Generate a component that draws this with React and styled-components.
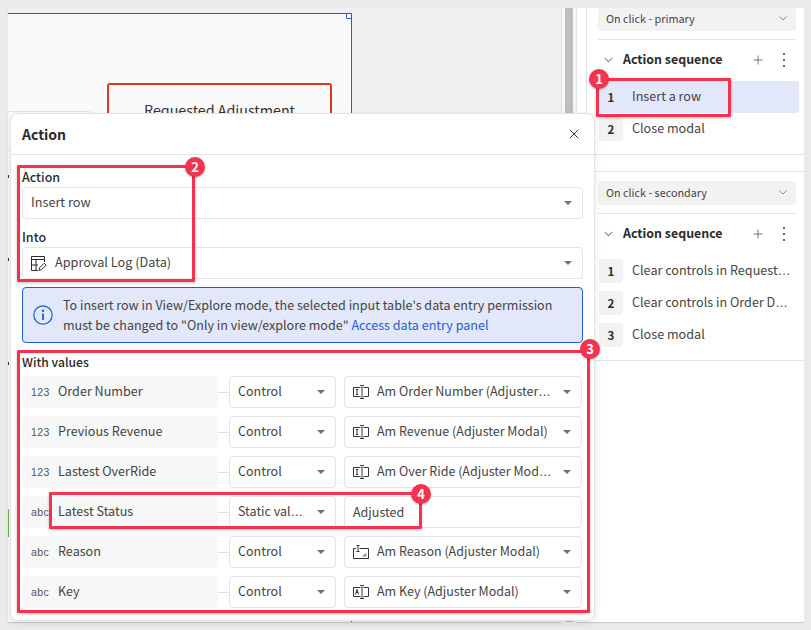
import React from "react";
import styled, { createGlobalStyle } from "styled-components";

const Global = createGlobalStyle`
  html, body { margin: 0; padding: 0; background: #ebebeb; }
  * { box-sizing: border-box; }
  body { font-family: "Noto Sans CJK KR", "Noto Sans", sans-serif; color: #2b2b2b; -webkit-font-smoothing: antialiased; }
`;

const Page = styled.div`
  position: relative; width: 811px; height: 630px; overflow: hidden;
  display: flex; padding: 8px 8px 0 8px; background: #ebebeb;
`;
const Canvas = styled.div`
  position: relative; width: 553px; height: 614px; background: #f0f0f0; flex: none;
  box-shadow: 0 1px 1px rgba(0,0,0,.12);
`;
const Frame = styled.div`
  position: absolute; left: 0; top: 5px; width: 344px; height: 609px;
  background: #fafafa; border-top: 1px solid #1f5fd6; border-right: 1px solid #1f5fd6;
`;
const Handle = styled.span`
  position: absolute; right: -1px; top: -1px; width: 6px; height: 6px;
  background: #fff; border: 1px solid #1f5fd6; border-radius: 1px;
`;
const RequestBox = styled.div`
  position: absolute; left: 99px; top: 69px; width: 225px; height: 70px;
  border: 2px solid #d93a1e; border-radius: 3px; text-align: center;
  font-size: 14.3px; line-height: 20px; padding-top: 15px; color: #333;
`;
const GhostBox = styled.div`
  position: absolute; left: 0; top: 97px; width: 83px; height: 40px;
  border: 1px solid #e4e4e4; border-left: none; border-radius: 0 3px 0 0;
`;
const GreenBar = styled.span`
  position: absolute; left: 0; top: 495px; width: 1px; height: 28px; background: #6ab04c;
`;
const Tick = styled.span`
  position: absolute; left: 0; top: ${p => p.$y}px; width: 1px; height: 3px; background: #333;
`;
const ScrollTrack = styled.div`
  width: 4px; height: 614px; background: #f8f8f8; border-left: 1px solid #e6e6e6; flex: none;
`;
const Scrollbar = styled.div`
  width: 8px; height: 614px; background: #bdbdbd; flex: none;
`;
const Gutter = styled.div`
  width: 3px; flex: none; background: #f7f7f7; height: 614px;
`;
const PanelEdge = styled.div`
  width: 10px; height: 614px; background: #fff; flex: none; border-left: 1px solid #e2e2e2;
  box-shadow: 0 1px 1px rgba(0,0,0,.12);
`;
const Panel = styled.aside`
  width: 218px; height: 614px; background: #fff; flex: none; border-left: 1px solid #e2e2e2;
  box-shadow: 0 1px 1px rgba(0,0,0,.12);
`;
const Section = styled.section`
  padding: 0 0 0 11px; border-bottom: 1px solid #e4e4e4;
  height: ${p => p.$h}px; padding-top: ${p => p.$top}px;
  border-top: ${p => (p.$line ? "1px solid #e4e4e4" : "none")};
`;
const Spacer = styled.div`
  height: 16px;
`;
const TriggerSelect = styled.div`
  width: 198px; height: ${p => p.$h}px; background: #f2f2f2; border-radius: 4px;
  display: flex; align-items: center; justify-content: space-between; padding: 0 8px ${p => p.$pb}px;
  font-size: 10.8px; color: #444;
`;
const SeqDivider = styled.div`
  width: 198px; height: 1px; background: #e4e4e4; margin-top: 8px;
`;
const SeqHeader = styled.div`
  display: flex; align-items: center; height: 41px; width: 198px; padding: 0 10px 2px 5px; color: #666;
`;
const SeqTitle = styled.div`
  flex: 1; font-size: 12.4px; font-weight: 700; color: #2b2b2b; margin-left: 9px; padding-bottom: 1px;
`;
const PlusGap = styled.span`
  width: 19px; flex: none;
`;
const SeqRow = styled.div`
  display: flex; align-items: center; height: 32px; width: 201px; padding-left: 1px;
  background: ${p => (p.$active ? "#e2e8fa" : "transparent")}; border-radius: 3px;
  font-size: 12.6px; color: #444;
`;
const SeqNum = styled.span`
  width: 24px; height: 24px; flex: none; border-radius: 3px; font-size: 11.5px; font-weight: 600; color: #2b2b2b;
  display: flex; align-items: center; justify-content: center;
  background: ${p => (p.$active ? "transparent" : "#f2f2f2")};
  margin-right: 9px;
`;
const SeqText = styled.span`
  white-space: nowrap; padding-bottom: 4px;
`;
const Dots = styled.span`
  font-family: "Liberation Sans", sans-serif;
`;

const Modal = styled.div`
  position: absolute; left: 10px; top: 113px; width: 585px; height: 508px; background: #fff;
  border: 1px solid #e3e3e3; border-radius: 8px; box-shadow: 0 2px 6px rgba(0,0,0,.1);
`;
const ModalHeader = styled.header`
  height: 41px; display: flex; align-items: center; justify-content: space-between;
  padding: 0 15px 0 11px; border-bottom: 1px solid #e4e4e4;
  font-size: 14px; font-weight: 600; color: #2b2b2b;
`;
const ModalBody = styled.div`
  padding: 0 11px;
`;
const Label = styled.div`
  font-size: 12.5px; font-weight: 500; height: 20px; color: #2b2b2b;
  margin-top: ${p => p.$top}px; padding-top: 3px; line-height: 14px;
`;
const Select = styled.div`
  height: 32px; border: 1px solid #e4e4e4; border-radius: 4px; background: #fff;
  display: flex; align-items: center; padding: 0 10px 0 8px;
  font-size: ${p => p.$fs ?? 12.5}px; color: #444; width: ${p => (p.$w ? p.$w + "px" : "auto")}; flex: none;
`;
const SelectText = styled.span`
  flex: 1; white-space: nowrap; min-width: 0; padding-bottom: ${p => p.$pb ?? 3}px;
`;
const Caret = styled.span`
  width: 0; height: 0; flex: none; margin-left: 12px; border-left: 4px solid transparent; border-right: 4px solid transparent;
  border-top: 4px solid #707070;
`;
const LeadIcon = styled.span`
  display: flex; width: 16px; margin-right: 8px; flex: none; color: #333;
`;
const Info = styled.div`
  margin-top: 8px; height: 56px; background: #e2e8fa; border: 1px solid #1f5fd6; border-radius: 4px;
  display: flex; align-items: center; padding: 0 10px; gap: 10px; font-size: 12.55px; line-height: 20px; color: #444;
`;
const InfoLink = styled.span`
  color: #1f5fd6;
`;
const ValuesLabel = styled.div`
  font-size: 12.2px; font-weight: 500; margin-top: 11px; height: 22px; line-height: 16px;
`;
const ValueRows = styled.div`
  display: flex; flex-direction: column; gap: 8px;
`;
const ValueRow = styled.div`
  display: flex; align-items: center;
`;
const NameCell = styled.div`
  width: 196px; height: 32px; background: #f7f7f7; border-radius: 3px; flex: none;
  display: flex; align-items: center; font-size: 12.6px; color: #444; padding-left: 9px;
`;
const NameText = styled.span`
  padding-bottom: 3px;
`;
const TypeTag = styled.span`
  width: 27px; font-family: "Liberation Sans", sans-serif; font-size: 10.5px; color: #555; flex: none; letter-spacing: .4px; padding-bottom: 1px;
`;
const Connector = styled.span`
  width: 11px; height: 1px; background: #e0e0e0; flex: none;
`;
const RowGap = styled.span`
  width: 8px; flex: none;
`;

const Callout = styled.div`
  position: absolute; border: 3px solid #f5334f; border-radius: 1px;
  left: ${p => p.$x}px; top: ${p => p.$y}px; width: ${p => p.$w}px; height: ${p => p.$h}px;
  box-shadow: 0 1px 3px rgba(0,0,0,.25); pointer-events: none;
`;
const Badge = styled.span`
  position: absolute; width: 20px; height: 20px; border-radius: 50%; background: #f5334f; color: #fff;
  left: ${p => p.$x - 10}px; top: ${p => p.$y - 10}px; padding-bottom: 1px;
  font-size: 13px; font-weight: 700; display: flex; align-items: center; justify-content: center;
  box-shadow: 0 1px 2px rgba(0,0,0,.25);
`;

const Chevron = ({ c = "#8a8a8a", s = 10 }) => (
  <svg width={s} height={s} viewBox="0 0 10 10" fill="none"><path d="M1.5 3.5 5 7l3.500-3.500" stroke={c} strokeWidth="1" /></svg>
);
const Plus = () => (
  <svg width="10" height="10" viewBox="0 0 10 10"><path d="M5 .5v9M.5 5h9" stroke="#777" strokeWidth="1" /></svg>
);
const Kebab = () => (
  <svg width="4" height="16" viewBox="0 0 4 16" fill="#444"><circle cx="2" cy="2" r="1.1" /><circle cx="2" cy="8" r="1.1" /><circle cx="2" cy="14" r="1.1" /></svg>
);
const Close = () => (
  <svg width="10" height="10" viewBox="0 0 10 10"><path d="M.7.7l8.600 8.600M9.300.7.700 9.300" stroke="#333" strokeWidth="1" /></svg>
);
const InfoIcon = () => (
  <svg width="20" height="20" viewBox="0 0 20 20" fill="none" style={{ flex: "none" }}>
    <circle cx="10" cy="10" r="9.200" stroke="#1f5fd6" strokeWidth="1.200" />
    <circle cx="10" cy="5.800" r="1.200" fill="#1f5fd6" />
    <path d="M10 8.500v6.500" stroke="#1f5fd6" strokeWidth="1.800" />
  </svg>
);
const TableEdit = () => (
  <svg width="16" height="16" viewBox="0 0 16 16" fill="none" stroke="#2b2b2b" strokeWidth="1">
    <path d="M7 15.500H.5V1.500h13V7M.5 4.500h13M5 4.500v11M.5 10H7" />
    <path d="M8 15.300l.6-2.500 4.600-4.600 1.900 1.900-4.600 4.600z" />
  </svg>
);
const ControlIcon = ({ kind }) => (
  <svg width="16" height="16" viewBox="0 0 16 16" fill="none" stroke="#333" strokeWidth="1">
    <path d="M7.500 3.500H.5v9h7M10.500 3.500h5v9h-5" />
    <path d="M7 1.500h1.500M11 1.500H9.500M9 1.500v13M7 14.500h4" />
    {kind === "A"
      ? <path d="M2.500 10.500l1.500-5 1.500 5M3 8.500h2" />
      : <path d="M2.800 5.500h2.500M4 5.500v5M2.800 10.500h2.500" />}
  </svg>
);
const TextAreaIcon = () => (
  <svg width="16" height="16" viewBox="0 0 16 16" fill="none" stroke="#333" strokeWidth="1">
    <path d="M3 4.500H.5v10h15v-10H9" />
    <path d="M3.500 1.500h3M5 1.500v6M3.500 7.500h3M6.500 4.500h4" />
    <path d="M10 12.500l3-3M12 12.500l1.500-1.500" />
  </svg>
);

const Clipped = ({ text }) =>
  text.endsWith("…") ? <>{text.slice(0, -1)}<Dots>…</Dots></> : text;

const values = [
  ["123", "Order Number", "Control", "Am Order Number (Adjuster…", "I"],
  ["123", "Previous Revenue", "Control", "Am Revenue (Adjuster Modal)", "I"],
  ["123", "Lastest OverRide", "Control", "Am Over Ride (Adjuster Mod…", "I"],
  ["abc", "Latest Status", "Static val…", "Adjusted", null],
  ["abc", "Reason", "Control", "Am Reason (Adjuster Modal)", "T"],
  ["abc", "Key", "Control", "Am Key (Adjuster Modal)", "A"],
];

const Sequence = ({ items, active }) => (
  <>
    <SeqHeader>
      <Chevron s={11} />
      <SeqTitle>Action sequence</SeqTitle>
      <Plus />
      <PlusGap />
      <Kebab />
    </SeqHeader>
    {items.map((t, i) => (
      <SeqRow key={t} $active={active === i}>
        <SeqNum $active={active === i}>{i + 1}</SeqNum>
        <SeqText><Clipped text={t} /></SeqText>
      </SeqRow>
    ))}
  </>
);

export default function App() {
  return (
    <Page>
      <Global />
      <Canvas>
        <Frame>
          <Handle />
          <RequestBox>Requested Adjustment</RequestBox>
          <GhostBox />
          <GreenBar />
          <Tick $y={161} />
          <Tick $y={244} />
          <Tick $y={348} />
        </Frame>
      </Canvas>
      <ScrollTrack />
      <Scrollbar />
      <Gutter />
      <PanelEdge />
      <Panel>
        <Section $h={147} $top={0}>
          <TriggerSelect $h={23} $pb={3}>On click - primary<Chevron /></TriggerSelect>
          <SeqDivider />
          <Sequence items={["Insert a row", "Close modal"]} active={0} />
        </Section>
        <Spacer />
        <Section $h={190} $top={9} $line>
          <TriggerSelect $h={24} $pb={2}>On click - secondary<Chevron /></TriggerSelect>
          <SeqDivider />
          <Sequence items={["Clear controls in Request…", "Clear controls in Order D…", "Close modal"]} />
        </Section>
      </Panel>

      <Modal>
        <ModalHeader>Action<Close /></ModalHeader>
        <ModalBody>
          <Label $top={12}>Action</Label>
          <Select $fs={12.7}><SelectText>Insert row</SelectText><Caret /></Select>
          <Label $top={8}>Into</Label>
          <Select $fs={12.7}><LeadIcon><TableEdit /></LeadIcon><SelectText>Approval Log (Data)</SelectText><Caret /></Select>
          <Info>
            <InfoIcon />
            <div>
              To insert row in View/Explore mode, the selected input table's data entry permission must be changed to "Only in view/explore mode" <InfoLink>Access data entry panel</InfoLink>
            </div>
          </Info>
          <ValuesLabel>With values</ValuesLabel>
          <ValueRows>
            {values.map(([tag, name, src, val, icon]) => (
              <ValueRow key={name}>
                <NameCell><TypeTag>{tag}</TypeTag><NameText>{name}</NameText></NameCell>
                <Connector />
                <Select $w={107}><SelectText><Clipped text={src} /></SelectText><Caret /></Select>
                <RowGap />
                <Select $w={238}>
                  {icon && <LeadIcon>{icon === "T" ? <TextAreaIcon /> : <ControlIcon kind={icon} />}</LeadIcon>}
                  <SelectText $pb={icon ? 3 : 1}><Clipped text={val} /></SelectText>
                  {icon && <Caret />}
                </Select>
              </ValueRow>
            ))}
          </ValueRows>
        </ModalBody>
      </Modal>

      <Callout $x={596} $y={78} $w={135} $h={39} />
      <Callout $x={17} $y={165} $w={178} $h={117} />
      <Callout $x={17} $y={350} $w={573} $h={263} />
      <Callout $x={49} $y={492} $w={373} $h={37} />
      <Badge $x={599} $y={79}>1</Badge>
      <Badge $x={195} $y={167}>2</Badge>
      <Badge $x={590} $y={349}>3</Badge>
      <Badge $x={421} $y={494}>4</Badge>
    </Page>
  );
}
